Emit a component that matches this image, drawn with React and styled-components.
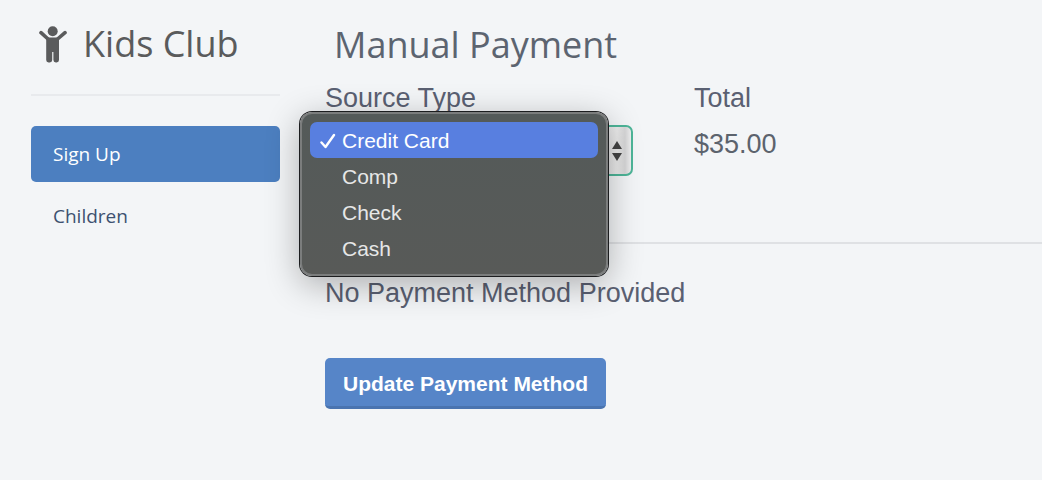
import React, { useState } from 'react'
import styled, { createGlobalStyle } from 'styled-components'

const sources = ['Credit Card', 'Comp', 'Check', 'Cash']

function ChildIcon() {
    return (
        <svg viewBox="0 0 28 37" aria-hidden="true" fill="currentColor">
            <circle cx="13.7" cy="5.2" r="5" />
            <path
                d="M2 6.6 L9 13 M26 6.6 L18.6 13"
                fill="none"
                stroke="currentColor"
                strokeWidth="3.6"
                strokeLinecap="round"
            />
            <path d="M7.6 11.4 H20 V34 A2.4 2.4 0 0 1 17.6 36.4 H16.8 A2.4 2.4 0 0 1 14.4 34 V26 H13.2 V34 A2.4 2.4 0 0 1 10.8 36.4 H9.6 A2.4 2.4 0 0 1 7.2 34 V11.4 Z" />
        </svg>
    )
}

function App() {
    const [source, setSource] = useState('Credit Card')

    return (
        <>
        <GlobalStyle />
        <Page>
            <Sidebar>
                <Brand>
                    <ChildIcon />
                    <h1>Kids Club</h1>
                </Brand>
                <Nav>
                    <NavLink href="#signup" $active aria-current="page">Sign Up</NavLink>
                    <NavLink href="#children">Children</NavLink>
                </Nav>
            </Sidebar>
            <Main>
                <Title>Manual Payment</Title>
                <Fields>
                    <Field>
                        <Label htmlFor="source">Source Type</Label>
                        <SelectWrap>
                            <Select id="source" value={source} onChange={e => setSource(e.target.value)}>
                                {sources.map(s => <option key={s}>{s}</option>)}
                            </Select>
                            <Arrows viewBox="0 0 10 20" aria-hidden="true">
                                <path d="M5 0 L10 8 H0 Z M0 12 H10 L5 20 Z" />
                            </Arrows>
                            <Menu role="listbox" aria-label="Source Type">
                                {sources.map(s => (
                                    <Option
                                        key={s}
                                        type="button"
                                        role="option"
                                        aria-selected={s === source}
                                        $selected={s === source}
                                        onClick={() => setSource(s)}
                                    >
                                        <Check viewBox="0 0 16 16" aria-hidden="true">
                                            {s === source && <path d="M1.5 9.5 L5.5 14 L14 2" />}
                                        </Check>
                                        {s}
                                    </Option>
                                ))}
                            </Menu>
                        </SelectWrap>
                    </Field>
                    <Field>
                        <Label as="span">Total</Label>
                        <Amount>$35.00</Amount>
                    </Field>
                </Fields>
                <Method>
                    <p>No Payment Method Provided</p>
                    <Button type="button">Update Payment Method</Button>
                </Method>
            </Main>
        </Page>
        </>
    )
}

export default App

const GlobalStyle = createGlobalStyle`
    * {
        box-sizing: border-box;
    }
    body {
        margin: 0;
        background: #f3f5f7;
        color: #5a6072;
        font-family: "Liberation Sans", Arial, sans-serif;
        font-size: 27px;
        line-height: 32px;
    }
    h1, h2, p {
        margin: 0;
    }
`
const Page = styled.div`
    display: grid;
    grid-template-columns: 249px 1fr;
    column-gap: 45px;
    min-height: 100vh;
    padding-left: 31px;
`
const Sidebar = styled.aside`
    font-family: "Open Sans", "Noto Sans", sans-serif;
`
const Brand = styled.div`
    display: flex;
    align-items: center;
    gap: 16px;
    height: 96px;
    padding: 0 0 6px 8px;
    border-bottom: 2px solid #e8eaed;
    color: #5a5b5c;

    svg {
        width: 28px;
        height: 37px;
    }
    h1 {
        font-size: 36px;
        font-weight: 400;
        line-height: 48px;
        white-space: nowrap;
    }
`
const Nav = styled.nav`
    display: flex;
    flex-direction: column;
    gap: 6px;
    padding-top: 30px;
`
const NavLink = styled.a`
    padding: 14px 22px;
    border-radius: 5px;
    background: ${props => props.$active ? '#4c7fc0' : 'transparent'};
    color: ${props => props.$active ? 'white' : '#3d5170'};
    font-size: 19px;
    line-height: 28px;
    text-decoration: none;
`
const Main = styled.main`
    padding-top: 20px;
`
const Title = styled.h2`
    padding-left: 9px;
    color: #5c6470;
    font-family: "Open Sans", "Noto Sans", sans-serif;
    font-size: 36px;
    font-weight: 400;
    line-height: 50px;
`
const Fields = styled.div`
    display: grid;
    grid-template-columns: 308px 1fr;
    column-gap: 61px;
    padding: 12px 0 66px;
    border-bottom: 2px solid #dfe1e4;
`
const Field = styled.div`
    display: flex;
    flex-direction: column;
`
const Label = styled.label`
    margin-bottom: 11px;
`
const Amount = styled.output`
    padding-top: 3px;
    color: #5c636d;
`
const SelectWrap = styled.div`
    position: relative;
`
const Select = styled.select`
    display: block;
    width: 100%;
    height: 51px;
    padding: 0 32px 0 16px;
    appearance: none;
    border: 2px solid #4db598;
    border-radius: 7px;
    background: linear-gradient(to right, #e4e4e5 calc(100% - 24px), #ececec calc(100% - 14px), #d6d6d7 calc(100% - 6px), #eeeeef);
    color: #5a6072;
    font: inherit;
    font-size: 21px;
`
const Arrows = styled.svg`
    position: absolute;
    top: 16px;
    right: 11px;
    width: 10px;
    height: 20px;
    fill: #444;
    pointer-events: none;
`
const Menu = styled.div`
    position: absolute;
    top: -13px;
    left: -25px;
    z-index: 1;
    display: flex;
    flex-direction: column;
    width: 100%;
    padding: 8px;
    border: 2px solid #7b7d7d;
    border-radius: 12px;
    background: linear-gradient(#545a59, #585a58);
    box-shadow: 0 0 0 1px #1c1d1f, 0 8px 34px rgba(0, 0, 0, 0.3);
`
const Option = styled.button`
    display: flex;
    align-items: center;
    gap: 6px;
    padding: 3px 10px 1px;
    border: 0;
    border-radius: 7px;
    background: ${props => props.$selected ? '#587fe0' : 'transparent'};
    color: ${props => props.$selected ? 'white' : '#e6e7e7'};
    font: inherit;
    font-size: 21px;
    text-align: left;
`
const Check = styled.svg`
    width: 16px;
    height: 16px;
    fill: none;
    stroke: currentColor;
    stroke-width: 2.4;
    stroke-linecap: round;
    stroke-linejoin: round;
`
const Method = styled.section`
    display: flex;
    flex-direction: column;
    align-items: flex-start;
    gap: 49px;
    padding-top: 33px;
`
const Button = styled.button`
    padding: 10px 18px 6px;
    border: 0;
    border-bottom: 3px solid #4a74b0;
    border-radius: 5px;
    background: #5685c8;
    color: white;
    font: inherit;
    font-size: 21px;
    font-weight: 700;
`
